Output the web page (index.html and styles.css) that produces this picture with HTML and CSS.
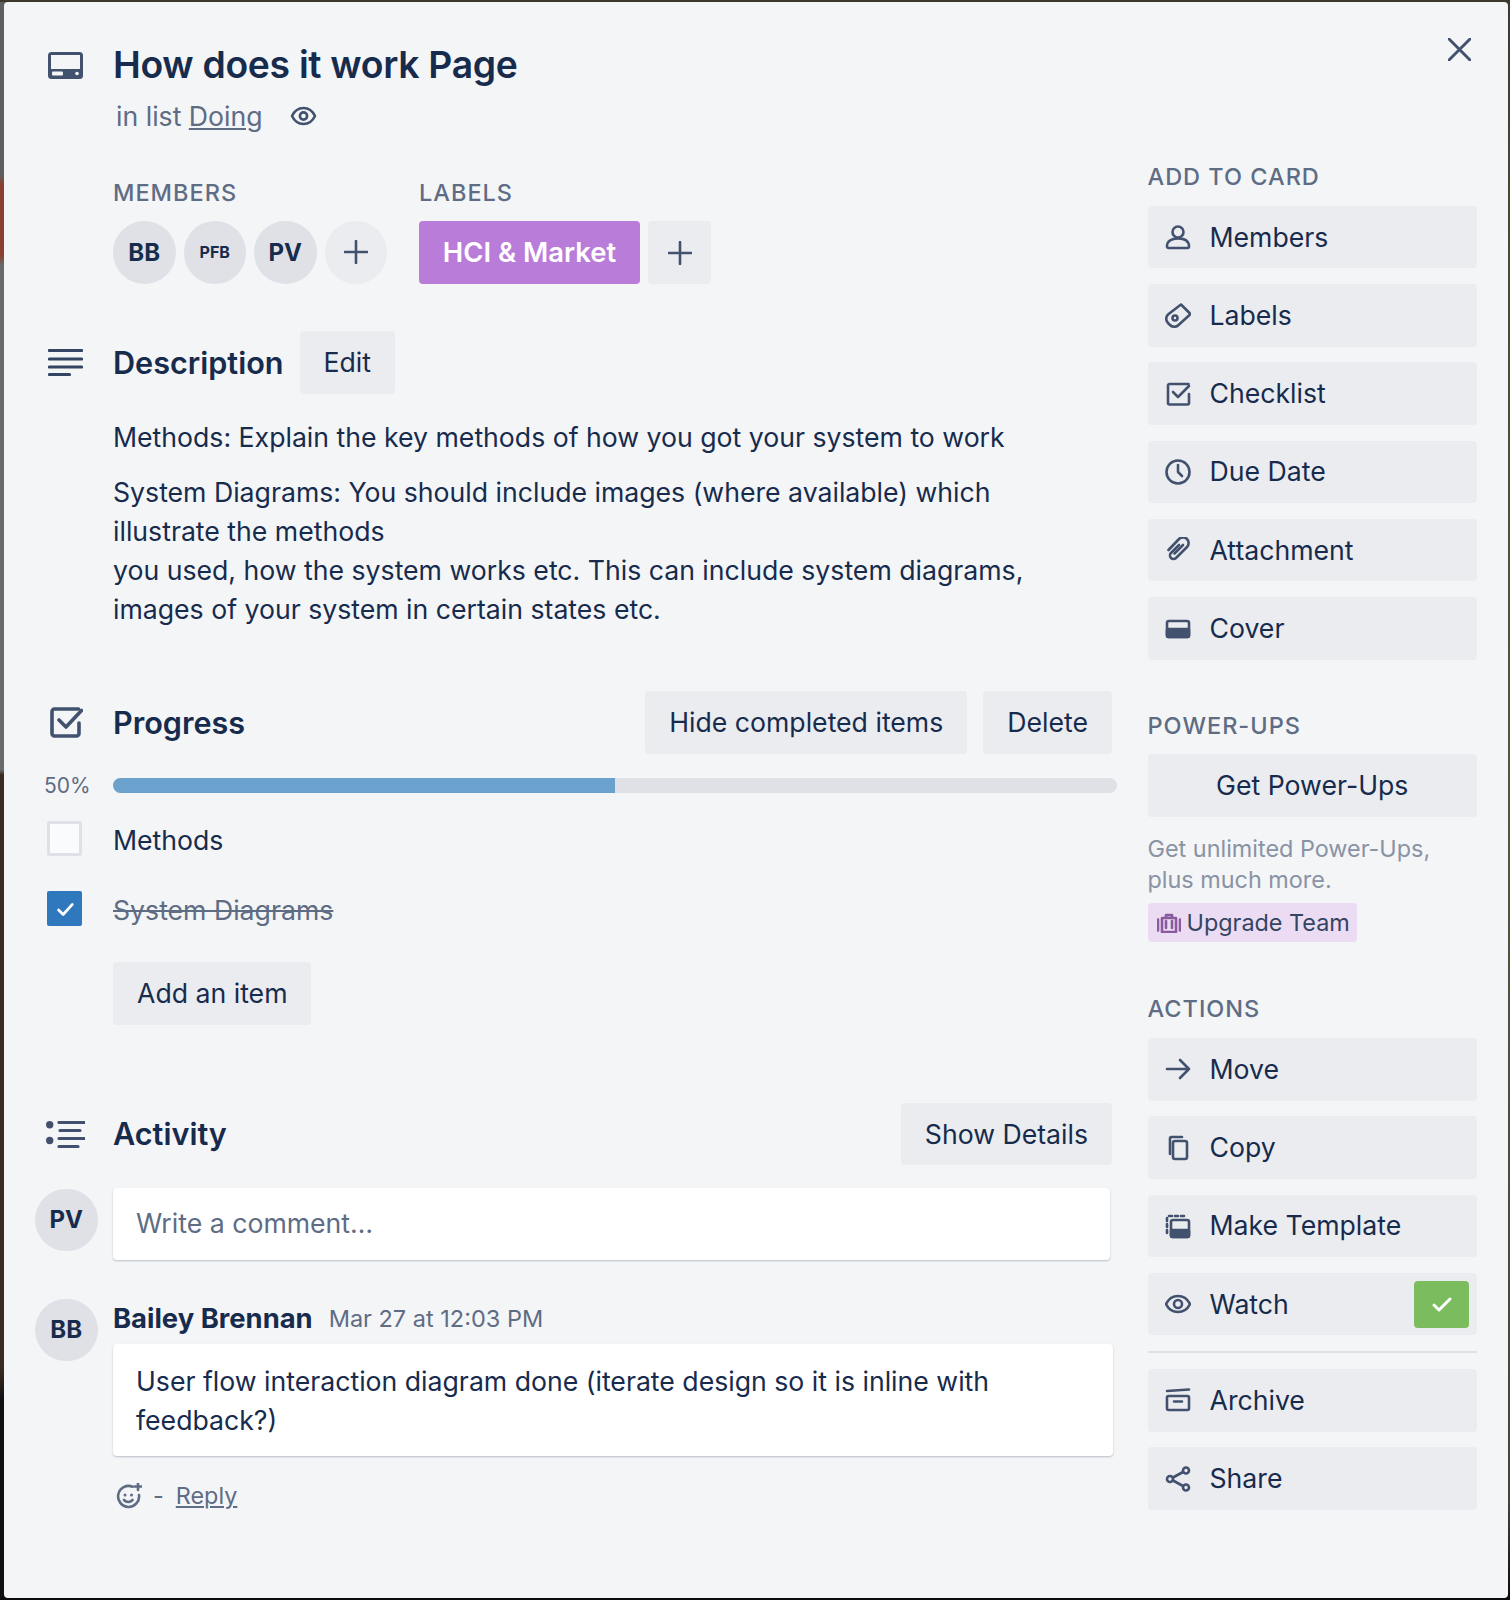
FILE: index.html

```html
<!DOCTYPE html>
<html lang="en">
<head>
  <meta charset="UTF-8" />
  <title>How does it work Page</title>
  <link rel="stylesheet" href="styles.css">
</head>
<body>

<div class="modal">
  <svg class="close" viewBox="0 0 24 24"><path d="M1 1l22 22M23 1L1 23"/></svg>

  <div class="main">
    <div class="row title-row">
      <div class="gutter">
        <svg class="head-icon card-icon" viewBox="0 0 35 27"><rect width="35" height="27" rx="3.500" fill="#42526e" stroke="none"/><rect x="3" y="3" width="29" height="14" fill="#f4f5f7" stroke="none"/><rect x="4" y="19.500" width="11" height="4" rx="1" fill="#f4f5f7" stroke="none"/><circle cx="29" cy="21.500" r="1.800" fill="#f4f5f7" stroke="none"/></svg>
      </div>
      <h1>How does it work Page</h1>
    </div>
    <div class="row subtitle-row">
      <div class="gutter"></div>
      <p class="subtitle">in list <a href="#">Doing</a></p>
      <svg class="sub-eye" viewBox="0 0 26 20"><path d="M1.500 10C4 4.800 8 2 13 2s9 2.800 11.500 8C22 15.200 18 18 13 18S4 15.200 1.500 10z"/><circle cx="13" cy="10" r="3.600"/></svg>
    </div>

    <div class="row meta-row">
      <div class="gutter"></div>
      <div class="meta-group members-group">
        <h3 class="caps">MEMBERS</h3>
        <div class="avatars">
          <span class="avatar">BB</span>
          <span class="avatar avatar-small">PFB</span>
          <span class="avatar">PV</span>
          <span class="avatar avatar-add"><svg class="plus" viewBox="0 0 24 24"><path d="M12 1v22M1 12h22"/></svg></span>
        </div>
      </div>
      <div class="meta-group">
        <h3 class="caps">LABELS</h3>
        <div class="labels">
          <span class="label-chip">HCI &amp; Market</span>
          <span class="label-add"><svg class="plus" viewBox="0 0 24 24"><path d="M12 1v22M1 12h22"/></svg></span>
        </div>
      </div>
    </div>

    <div class="row head-row description-head">
      <div class="gutter">
        <svg class="head-icon lines-icon" viewBox="0 0 35 27"><path d="M1.500 1.500h32M1.500 10h32M1.500 18h32M1.500 25.500h20"/></svg>
      </div>
      <h2>Description</h2>
      <button class="btn edit-btn">Edit</button>
    </div>
    <div class="row">
      <div class="gutter"></div>
      <div class="description">
        <p>Methods: Explain the key methods of how you got your system to work</p>
        <p>System Diagrams: You should include images (where available) which illustrate the methods<br>you used, how the system works etc. This can include system diagrams, images of your system in certain states etc.</p>
      </div>
    </div>

    <div class="row head-row progress-head">
      <div class="gutter">
        <svg class="head-icon progress-icon" viewBox="0 0 33 31"><path d="M29 16v10.500a2.500 2.500 0 0 1-2.500 2.500h-22A2.500 2.500 0 0 1 2 26.500v-22A2.500 2.500 0 0 1 4.500 2h24"/><path d="M9 13l7 7L31.500 3.500"/></svg>
      </div>
      <h2>Progress</h2>
      <button class="btn head-btn">Hide completed items</button>
      <button class="btn">Delete</button>
    </div>
    <div class="row progress-row">
      <div class="gutter"><span class="percent">50%</span></div>
      <div class="bar"><div class="bar-fill" style="width: 50%"></div></div>
    </div>
    <div class="row check-row first-check">
      <div class="gutter"><span class="checkbox"></span></div>
      <span class="check-text">Methods</span>
    </div>
    <div class="row check-row">
      <div class="gutter"><span class="checkbox checked"><svg viewBox="0 0 24 24"><path d="M5 13l5 5L20 7"/></svg></span></div>
      <span class="check-text done">System Diagrams</span>
    </div>
    <div class="row add-row">
      <div class="gutter"></div>
      <button class="btn">Add an item</button>
    </div>

    <div class="row head-row activity-head">
      <div class="gutter">
        <svg class="head-icon activity-icon" viewBox="0 0 39 27"><circle cx="3.700" cy="3.700" r="3.700" fill="#42526e" stroke="none"/><circle cx="3.700" cy="19.500" r="3.700" fill="#42526e" stroke="none"/><path d="M13 1.500h26M14 9.500h20M13 17.500h26M13 25.500h19"/></svg>
      </div>
      <h2>Activity</h2>
      <button class="btn head-btn">Show Details</button>
    </div>
    <div class="row comment-input-row">
      <div class="gutter"><span class="avatar gutter-avatar">PV</span></div>
      <div class="comment-input">Write a comment…</div>
    </div>
    <div class="row comment-row">
      <div class="gutter"><span class="avatar gutter-avatar">BB</span></div>
      <div class="comment">
        <div class="comment-meta"><strong>Bailey Brennan</strong><span class="date">Mar 27 at 12:03 PM</span></div>
        <div class="comment-box">User flow interaction diagram done (iterate design so it is inline with feedback?)</div>
        <div class="comment-actions">
          <svg class="react-icon" viewBox="0 0 26 26"><path d="M16.500 3.700A10.500 10.500 0 1 0 23 12"/><circle cx="9" cy="12" r="1.500" fill="#5e6c84" stroke="none"/><circle cx="15.500" cy="12" r="1.500" fill="#5e6c84" stroke="none"/><path d="M8 17c2.500 2.600 6 2.600 8.500 0M22 0v7M18.500 3.500h7"/></svg>
          <span class="dash">-</span>
          <a href="#">Reply</a>
        </div>
      </div>
    </div>
  </div>

  <div class="sidebar">
    <h3 class="caps">ADD TO CARD</h3>
    <button class="btn side-btn"><svg class="side-icon" viewBox="0 0 26 26"><circle cx="13" cy="8" r="5.500"/><path d="M2 22.500c0-5 4-8 11-8s11 3 11 8c0 1-.7 1.500-1.500 1.500h-19C2.700 24 2 23.500 2 22.500z"/></svg>Members</button>
    <button class="btn side-btn"><svg class="side-icon" viewBox="0 0 26 26"><path d="M16 2.500l8.500 8.500a1.500 1.500 0 0 1 0 2L13.500 23a6 6 0 0 1-8.500 0L3 21a6 6 0 0 1 0-8.500z"/><circle cx="10" cy="16" r="2.500"/></svg>Labels</button>
    <button class="btn side-btn"><svg class="side-icon" viewBox="0 0 26 26"><path d="M24 13v9a1.500 1.500 0 0 1-1.500 1.500h-18A1.500 1.500 0 0 1 3 22V4.500A1.500 1.500 0 0 1 4.500 3h19"/><path d="M8 11l5 5 11-11"/></svg>Checklist</button>
    <button class="btn side-btn"><svg class="side-icon" viewBox="0 0 26 26"><circle cx="13" cy="13" r="11.500"/><path d="M13 6v7l4 4"/></svg>Due Date</button>
    <button class="btn side-btn"><svg class="side-icon" viewBox="0 0 26 26"><path d="M14 8l-8 8a3.500 3.500 0 0 0 5 5L22 10a5.500 5.500 0 0 0-8-8L3.500 13"/><path d="M18 8L9.500 16.500"/></svg>Attachment</button>
    <button class="btn side-btn"><svg class="side-icon" viewBox="0 0 26 26"><rect x="2" y="5" width="22" height="16" rx="2"/><rect x="2" y="13" width="22" height="8" rx="1" fill="#42526e"/></svg>Cover</button>

    <h3 class="caps powerups-title">POWER-UPS</h3>
    <button class="btn side-btn centered">Get Power-Ups</button>
    <p class="powerups-text">Get unlimited Power-Ups,<br>plus much more.</p>
    <span class="upgrade"><svg class="upgrade-icon" viewBox="0 0 24 20"><path d="M1 6.500v11M5 5h14v14H5zM23 6.500v11M9 5V2h6v3M9 8v7M15 8v7"/></svg>Upgrade Team</span>

    <h3 class="caps actions-title">ACTIONS</h3>
    <button class="btn side-btn"><svg class="side-icon" viewBox="0 0 26 26"><path d="M2 13h22M15 4l9 9-9 9"/></svg>Move</button>
    <button class="btn side-btn"><svg class="side-icon" viewBox="0 0 26 26"><rect x="8" y="6" width="14" height="18" rx="2"/><path d="M5 19V3.500A1.500 1.500 0 0 1 6.500 2H17"/></svg>Copy</button>
    <button class="btn side-btn"><svg class="side-icon" viewBox="0 0 26 26"><path stroke-dasharray="3 3" d="M2 20V4.500A2 2 0 0 1 4 3h18"/><rect x="6" y="7" width="18" height="17" rx="2"/><rect x="6" y="17" width="18" height="7" rx="1" fill="#42526e"/></svg>Make Template</button>
    <button class="btn side-btn watch-btn"><svg class="side-icon" viewBox="0 0 26 26"><path d="M1 13C3.500 8 7.500 5 13 5s9.500 3 12 8c-2.500 5-6.500 8-12 8S3.500 18 1 13z"/><circle cx="13" cy="13" r="4"/></svg>Watch<span class="watch-check"><svg viewBox="0 0 24 24"><path d="M4 13l5 5L20 7"/></svg></span></button>
    <hr class="divider">
    <button class="btn side-btn"><svg class="side-icon" viewBox="0 0 26 26"><rect x="2" y="9" width="22" height="14" rx="1.500"/><path d="M2 4l22-1.500M9 14.500h8"/></svg>Archive</button>
    <button class="btn side-btn"><svg class="side-icon" viewBox="0 0 26 26"><circle cx="21" cy="4.500" r="3"/><circle cx="5" cy="13" r="3"/><circle cx="21" cy="21.500" r="3"/><path d="M8 11.500l10-5.500M8 14.500l10 5.500"/></svg>Share</button>
  </div>
</div>

</body>
</html>
```

FILE: styles.css

```css
* { box-sizing: border-box; }
html, body { height: 100%; }
body { margin: 0; overflow: hidden; font-family: Inter, "Noto Sans", sans-serif; font-size: 26.650px; line-height: 39px; color: #172b4d;
  background:
    linear-gradient(#3d372e, #3d372e) top / 100% 2px no-repeat,
    linear-gradient(#0c0c0e, #0c0c0e) bottom / 100% 2px no-repeat,
    linear-gradient(#5f5f5f 0, #5f5f5f 175px, #8a4030 185px, #8a4030 255px, #6a6a6a 265px, #6a6a6a 770px, #3a2a20 775px, #3a2a20 1370px, #101012 1400px) left / 50% 100% no-repeat,
    linear-gradient(#3d372e 0, #4d4637 200px, #5a5344 800px, #4a4438 1500px, #0c0c0e 1596px) right / 50% 100% no-repeat; }
.modal { position: relative; display: flex; width: 1504px; height: 1596px; margin: 2px 0 0 4px; background: #f4f5f7; border-radius: 4px; }
.main { width: 1112px; padding-top: 38px; }
.row { display: flex; align-items: center; }
.gutter { flex: none; width: 109px; display: flex; align-items: center; }

svg { fill: none; stroke: #42526e; stroke-width: 2.600; stroke-linecap: round; stroke-linejoin: round; }
.close { position: absolute; top: 36px; left: 1444px; width: 23px; height: 23px; stroke-width: 3; }

h1 { margin: 0; font-size: 37.300px; line-height: 50px; font-weight: 600; letter-spacing: -0.3px; }
h2 { margin: 0; font-size: 30.600px; line-height: 40px; font-weight: 600; }
h3.caps { margin: 0; font-size: 23.500px; line-height: 26px; font-weight: 500; letter-spacing: 1px; color: #5e6c84; }
h3.powerups-title { margin-top: 37px; }
h3.actions-title { margin-top: 38px; }

.head-icon { display: block; }
.card-icon { width: 35px; height: 27px; margin-left: 44px; }
.lines-icon { width: 35px; height: 27px; margin-left: 44px; stroke: #344563; stroke-width: 3.200; }
.progress-icon { width: 33px; height: 31px; margin-left: 46px; stroke-width: 3.600; }
.activity-icon { width: 39px; height: 27px; margin-left: 42px; stroke-width: 3.200; }

.subtitle-row { margin-top: 6px; height: 40px; }
.subtitle { margin: 0 0 0 3px; color: #5e6c84; line-height: 40px; }
.subtitle a, .comment-actions a { color: #5e6c84; text-decoration: underline; }
.sub-eye { width: 27px; height: 20px; margin-left: 27px; }

.meta-row { margin-top: 44px; align-items: flex-start; }
.members-group { width: 306px; }
.avatars, .labels { display: flex; gap: 8px; margin-top: 15px; }
.avatar { flex: none; display: flex; align-items: center; justify-content: center; width: 62.500px; height: 62.500px; border-radius: 50%; background: #dfe1e6; font-size: 24px; font-weight: 700; }
.avatar-small { font-size: 16px; }
.avatar-add { background: #ebecf0; }
.plus { width: 24px; height: 24px; }
.label-chip { display: flex; align-items: center; height: 63px; width: 221px; justify-content: center; background: #b97cd9; color: #fff; border-radius: 4px; font-size: 27.400px; font-weight: 600; }
.label-add { display: flex; align-items: center; justify-content: center; width: 63px; height: 63px; background: #ebecf0; border-radius: 4px; }

.btn { display: inline-flex; align-items: center; height: 62.500px; padding: 0 24px; border: 0; border-radius: 4px; background: #ebecf0; color: #172b4d; font: inherit; }
.head-row { height: 63px; }
.description-head { margin-top: 47px; }
.edit-btn { margin-left: 16px; }
.description { width: 960px; margin-top: 23.500px; }
.description p { margin: 0 0 16px; }
.description p:last-child { margin-bottom: 0; }

.progress-head { margin-top: 62.500px; padding-right: 4px; }
.head-btn { margin-left: auto; margin-right: 16px; }
.activity-head .head-btn { margin-right: 0; }
.progress-row { margin-top: 23px; height: 16px; }
.percent { margin-left: 40px; color: #5e6c84; font-size: 21px; }
.bar { flex: 1; height: 15px; background: #dfe1e6; border-radius: 8px; overflow: hidden; margin-right: -1px; }
.bar-fill { height: 100%; background: #6aa2cd; }
.check-row { margin-top: 35px; height: 35px; }
.first-check { margin-top: 28px; }
.checkbox { display: flex; align-items: center; justify-content: center; width: 35px; height: 35px; margin-left: 43px; background: #fafbfc; border: 3px solid #dfe1e6; border-radius: 2px; }
.checkbox.checked { background: #2f78bd; border: 0; }
.checkbox svg { width: 22px; height: 22px; }
.checkbox svg, .watch-check svg { stroke: #fff; stroke-width: 3; }
.check-text { padding-top: 4px; }
.done { color: #5e6c84; text-decoration: line-through; }
.add-row { margin-top: 36px; }

.activity-head { margin-top: 78px; padding-right: 4px; }
.gutter-avatar { margin-left: 31px; }
.comment-input-row { margin-top: 22px; align-items: flex-start; }
.comment-input-row .gutter-avatar { margin-top: 1px; }
.comment-input { width: 997px; height: 72px; display: flex; align-items: center; padding-left: 23px; margin-right: 2px; background: #fff; border-radius: 4px; box-shadow: 0 1px 2px rgba(9,30,66,0.25); color: #5e6c84; }
.comment-row { margin-top: 39px; align-items: flex-start; }
.comment { width: 1000px; }
.comment-meta { display: flex; align-items: center; height: 40px; }
.comment-meta strong { font-size: 27.400px; font-weight: 700; }
.date { margin-left: 16px; color: #5e6c84; font-size: 23.500px; }
.comment-box { margin-top: 5.500px; padding: 18px 24px 15.500px 23px; background: #fff; border-radius: 4px; box-shadow: 0 1px 2px rgba(9,30,66,0.25); }
.comment-actions { display: flex; align-items: center; height: 40px; margin-top: 20px; color: #5e6c84; font-size: 23.400px; }
.react-icon { width: 26px; height: 26px; margin-left: 3px; stroke: #5e6c84; }
.dash { margin: 0 12px 0 11px; }

.sidebar { width: 329.500px; margin-left: 31.500px; padding-top: 162px; display: flex; flex-direction: column; gap: 15.800px; align-items: flex-start; }
.side-btn { width: 100%; height: 62.500px; padding: 0 0 0 17.500px; gap: 18.500px; }
.side-icon { flex: none; width: 26px; height: 26px; }
.centered { justify-content: center; padding: 0; }
.powerups-text { margin: 0; color: #8993a4; font-size: 23.400px; line-height: 31px; }
.upgrade { display: inline-flex; align-items: center; height: 39px; padding: 0 7px 0 9px; margin-top: -7px; background: #ecdcf3; border-radius: 4px; color: #344563; font-size: 23.400px; gap: 6px; }
.upgrade-icon { width: 24px; height: 20px; stroke: #8a5a9e; }
.watch-btn { position: relative; }
.watch-check { position: absolute; top: 8px; right: 8px; display: flex; align-items: center; justify-content: center; width: 55px; height: 47px; background: #7bbc5f; border-radius: 4px; }
.watch-check svg { width: 24px; height: 24px; }
.divider { width: 100%; height: 2px; margin: 0; border: 0; background: #dfe1e6; }
```
